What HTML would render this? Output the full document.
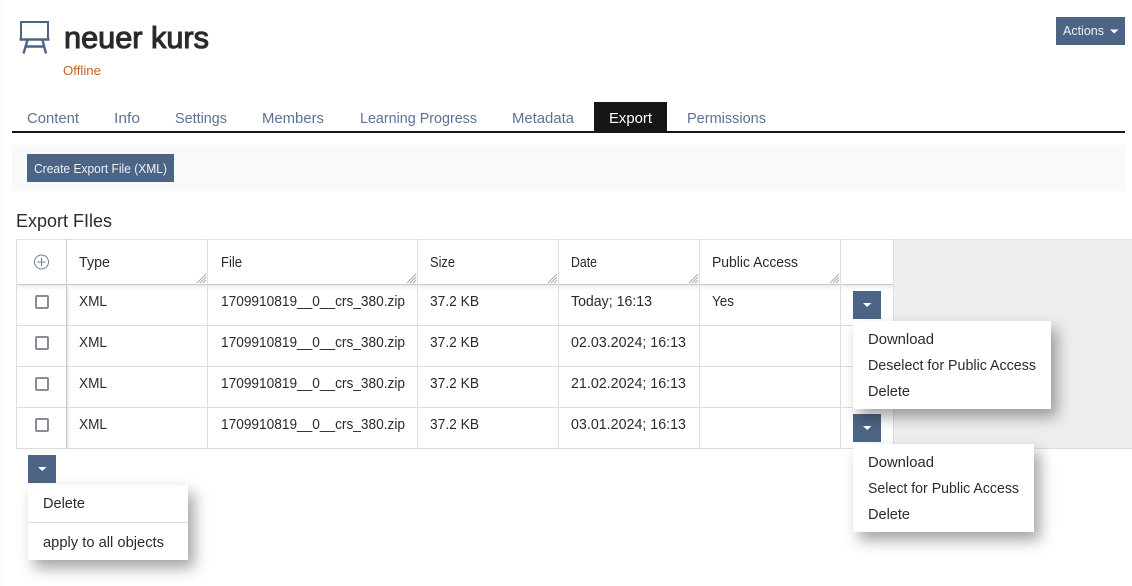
<!DOCTYPE html>
<html><head><meta charset="utf-8"><style>
html,body{margin:0;padding:0;background:#fff;width:1132px;height:586px;overflow:hidden}
.a{position:absolute}
.btn{position:absolute;background:#4c6586}
.menu{position:absolute;background:#fff;box-shadow:6px 8px 14px rgba(0,0,0,.36)}
svg{position:absolute;left:0;top:0}
text{font-family:"Liberation Sans",sans-serif;font-size:14.5px;fill:#2b2b2b}
.t{fill:#5d7293}
.w{fill:#eef1f5;font-size:12.5px}
</style></head><body>
<div class="a" style="left:1px;top:0;width:1px;height:586px;background:#f6f6f6"></div>
<div class="a" style="left:12px;top:131px;width:1113px;height:2px;background:#161616"></div>
<div class="a" style="left:594px;top:102px;width:73px;height:30px;background:#161616"></div>
<div class="a" style="left:12px;top:145px;width:1113px;height:46px;background:#f9f9f9"></div>
<div class="btn" style="left:27px;top:154px;width:147px;height:28px"></div>
<div class="btn" style="left:1056px;top:17px;width:69px;height:28px"></div>

<div class="a" style="left:893px;top:239px;width:239px;height:209px;background:#eee"></div>
<div class="a" style="left:16px;top:239px;width:1116px;height:1px;background:#e0e0e0"></div>
<div class="a" style="left:16px;top:448px;width:1116px;height:1px;background:#ddd"></div>
<div class="a" style="left:16px;top:240px;width:877px;height:208px;background:#fff"></div>
<div class="a" style="left:16px;top:285px;width:877px;height:5px;background:linear-gradient(#ececec,#fff)"></div>
<div class="a" style="left:67px;top:285px;width:3px;height:163px;background:linear-gradient(90deg,#e6e6e6,#fff)"></div>
<div class="a" style="left:16px;top:284px;width:877px;height:1px;background:#c8c8c8"></div>
<div class="a" style="left:16px;top:325px;width:877px;height:1px;background:#ddd"></div>
<div class="a" style="left:16px;top:366px;width:877px;height:1px;background:#ddd"></div>
<div class="a" style="left:16px;top:407px;width:877px;height:1px;background:#ddd"></div>
<div class="a" style="left:16px;top:239px;width:1px;height:210px;background:#ddd"></div>
<div class="a" style="left:66px;top:239px;width:1px;height:210px;background:#ccc"></div>
<div class="a" style="left:207px;top:239px;width:1px;height:210px;background:#ddd"></div>
<div class="a" style="left:417px;top:239px;width:1px;height:210px;background:#ddd"></div>
<div class="a" style="left:558px;top:239px;width:1px;height:210px;background:#ddd"></div>
<div class="a" style="left:699px;top:239px;width:1px;height:210px;background:#ddd"></div>
<div class="a" style="left:840px;top:239px;width:1px;height:210px;background:#ddd"></div>
<div class="a" style="left:893px;top:239px;width:1px;height:210px;background:#ddd"></div>

<div class="a" style="left:35px;top:295px;width:10px;height:10px;border:2px solid #8b8a9b;border-radius:2px"></div>
<div class="a" style="left:35px;top:336px;width:10px;height:10px;border:2px solid #8b8a9b;border-radius:2px"></div>
<div class="a" style="left:35px;top:377px;width:10px;height:10px;border:2px solid #8b8a9b;border-radius:2px"></div>
<div class="a" style="left:35px;top:418px;width:10px;height:10px;border:2px solid #8b8a9b;border-radius:2px"></div>

<div class="btn" style="left:853px;top:291px;width:28px;height:28px"></div>
<div class="btn" style="left:853px;top:414px;width:28px;height:28px"></div>
<div class="btn" style="left:28px;top:455px;width:28px;height:28px"></div>

<div class="menu" style="left:853px;top:321px;width:198px;height:88px"></div>
<div class="menu" style="left:853px;top:444px;width:181px;height:88px"></div>
<div class="menu" style="left:28px;top:485px;width:160px;height:75px"></div>
<div class="a" style="left:28px;top:522px;width:160px;height:1px;background:#ddd"></div>

<svg width="1132" height="586" viewBox="0 0 1132 586">
<g fill="none" stroke="#4c6586" stroke-width="2">
<rect x="21" y="22" width="27" height="17.5"/>
<path d="M19.5 39.5H49.5" stroke-width="2.4"/>
<path d="M27.5 40L23.5 53.5M42.5 40L46 53.5M25 46.5H44.5" stroke-width="2.4"/>
</g>
<g fill="none" stroke="#6a7f9c" stroke-width="1">
<circle cx="41.5" cy="262" r="7"/>
<path d="M41.5 258V266M37.5 262H45.5"/>
</g>
<g fill="#fff">
<path d="M1110 29.5H1118.5L1114.2 33.5Z"/>
<path d="M863 303H871.5L867.2 307Z"/>
<path d="M863 426H871.5L867.2 430Z"/>
<path d="M38 467H46.5L42.2 471Z"/>
</g>
<g stroke="#aaa" stroke-width="1" fill="none">
<path d="M197 283L206 274M200 283L206 277M203 283L206 280"/>
<path d="M407 283L416 274M410 283L416 277M413 283L416 280"/>
<path d="M548 283L557 274M551 283L557 277M554 283L557 280"/>
<path d="M689 283L698 274M692 283L698 277M695 283L698 280"/>
<path d="M830 283L839 274M833 283L839 277M836 283L839 280"/>
</g>

<text x="64" y="48" textLength="145" lengthAdjust="spacingAndGlyphs" style="font-size:31px;fill:#2a2a2a;stroke:#2a2a2a;stroke-width:1.1px">neuer kurs</text>
<text x="63" y="75" textLength="38" lengthAdjust="spacingAndGlyphs" style="font-size:12.5px;fill:#c8641e">Offline</text>

<text class="t" x="27" y="123" textLength="52" lengthAdjust="spacingAndGlyphs">Content</text>
<text class="t" x="114" y="123" textLength="26" lengthAdjust="spacingAndGlyphs">Info</text>
<text class="t" x="175" y="123" textLength="52" lengthAdjust="spacingAndGlyphs">Settings</text>
<text class="t" x="262" y="123" textLength="62" lengthAdjust="spacingAndGlyphs">Members</text>
<text class="t" x="360" y="123" textLength="117" lengthAdjust="spacingAndGlyphs">Learning Progress</text>
<text class="t" x="512" y="123" textLength="62" lengthAdjust="spacingAndGlyphs">Metadata</text>
<text x="609" y="123" textLength="43" lengthAdjust="spacingAndGlyphs" style="fill:#fff">Export</text>
<text class="t" x="687" y="123" textLength="79" lengthAdjust="spacingAndGlyphs">Permissions</text>

<text class="w" x="1063" y="35" textLength="41" lengthAdjust="spacingAndGlyphs">Actions</text>
<text class="w" x="34" y="173" textLength="133" lengthAdjust="spacingAndGlyphs">Create Export File (XML)</text>
<text x="16" y="227" textLength="96" lengthAdjust="spacingAndGlyphs" style="font-size:18.5px">Export FIles</text>

<text x="79" y="267" textLength="31" lengthAdjust="spacingAndGlyphs">Type</text>
<text x="221" y="267" textLength="21" lengthAdjust="spacingAndGlyphs">File</text>
<text x="430" y="267" textLength="25" lengthAdjust="spacingAndGlyphs">Size</text>
<text x="571" y="267" textLength="26" lengthAdjust="spacingAndGlyphs">Date</text>
<text x="712" y="267" textLength="86" lengthAdjust="spacingAndGlyphs">Public Access</text>

<text x="79" y="306" textLength="28" lengthAdjust="spacingAndGlyphs">XML</text>
<text x="221" y="306" textLength="184" lengthAdjust="spacingAndGlyphs">1709910819__0__crs_380.zip</text>
<text x="430" y="306" textLength="49" lengthAdjust="spacingAndGlyphs">37.2 KB</text>
<text x="571" y="306" textLength="81" lengthAdjust="spacingAndGlyphs">Today; 16:13</text>
<text x="712" y="306" textLength="22" lengthAdjust="spacingAndGlyphs">Yes</text>

<text x="79" y="347" textLength="28" lengthAdjust="spacingAndGlyphs">XML</text>
<text x="221" y="347" textLength="184" lengthAdjust="spacingAndGlyphs">1709910819__0__crs_380.zip</text>
<text x="430" y="347" textLength="49" lengthAdjust="spacingAndGlyphs">37.2 KB</text>
<text x="571" y="347" textLength="115" lengthAdjust="spacingAndGlyphs">02.03.2024; 16:13</text>

<text x="79" y="388" textLength="28" lengthAdjust="spacingAndGlyphs">XML</text>
<text x="221" y="388" textLength="184" lengthAdjust="spacingAndGlyphs">1709910819__0__crs_380.zip</text>
<text x="430" y="388" textLength="49" lengthAdjust="spacingAndGlyphs">37.2 KB</text>
<text x="571" y="388" textLength="115" lengthAdjust="spacingAndGlyphs">21.02.2024; 16:13</text>

<text x="79" y="429" textLength="28" lengthAdjust="spacingAndGlyphs">XML</text>
<text x="221" y="429" textLength="184" lengthAdjust="spacingAndGlyphs">1709910819__0__crs_380.zip</text>
<text x="430" y="429" textLength="49" lengthAdjust="spacingAndGlyphs">37.2 KB</text>
<text x="571" y="429" textLength="115" lengthAdjust="spacingAndGlyphs">03.01.2024; 16:13</text>

<text x="868" y="344" textLength="66" lengthAdjust="spacingAndGlyphs">Download</text>
<text x="868" y="370" textLength="168" lengthAdjust="spacingAndGlyphs">Deselect for Public Access</text>
<text x="868" y="396" textLength="42" lengthAdjust="spacingAndGlyphs">Delete</text>

<text x="868" y="467" textLength="66" lengthAdjust="spacingAndGlyphs">Download</text>
<text x="868" y="493" textLength="151" lengthAdjust="spacingAndGlyphs">Select for Public Access</text>
<text x="868" y="519" textLength="42" lengthAdjust="spacingAndGlyphs">Delete</text>

<text x="43" y="508" textLength="42" lengthAdjust="spacingAndGlyphs">Delete</text>
<text x="43" y="547" textLength="121" lengthAdjust="spacingAndGlyphs">apply to all objects</text>
</svg>
</body></html>
